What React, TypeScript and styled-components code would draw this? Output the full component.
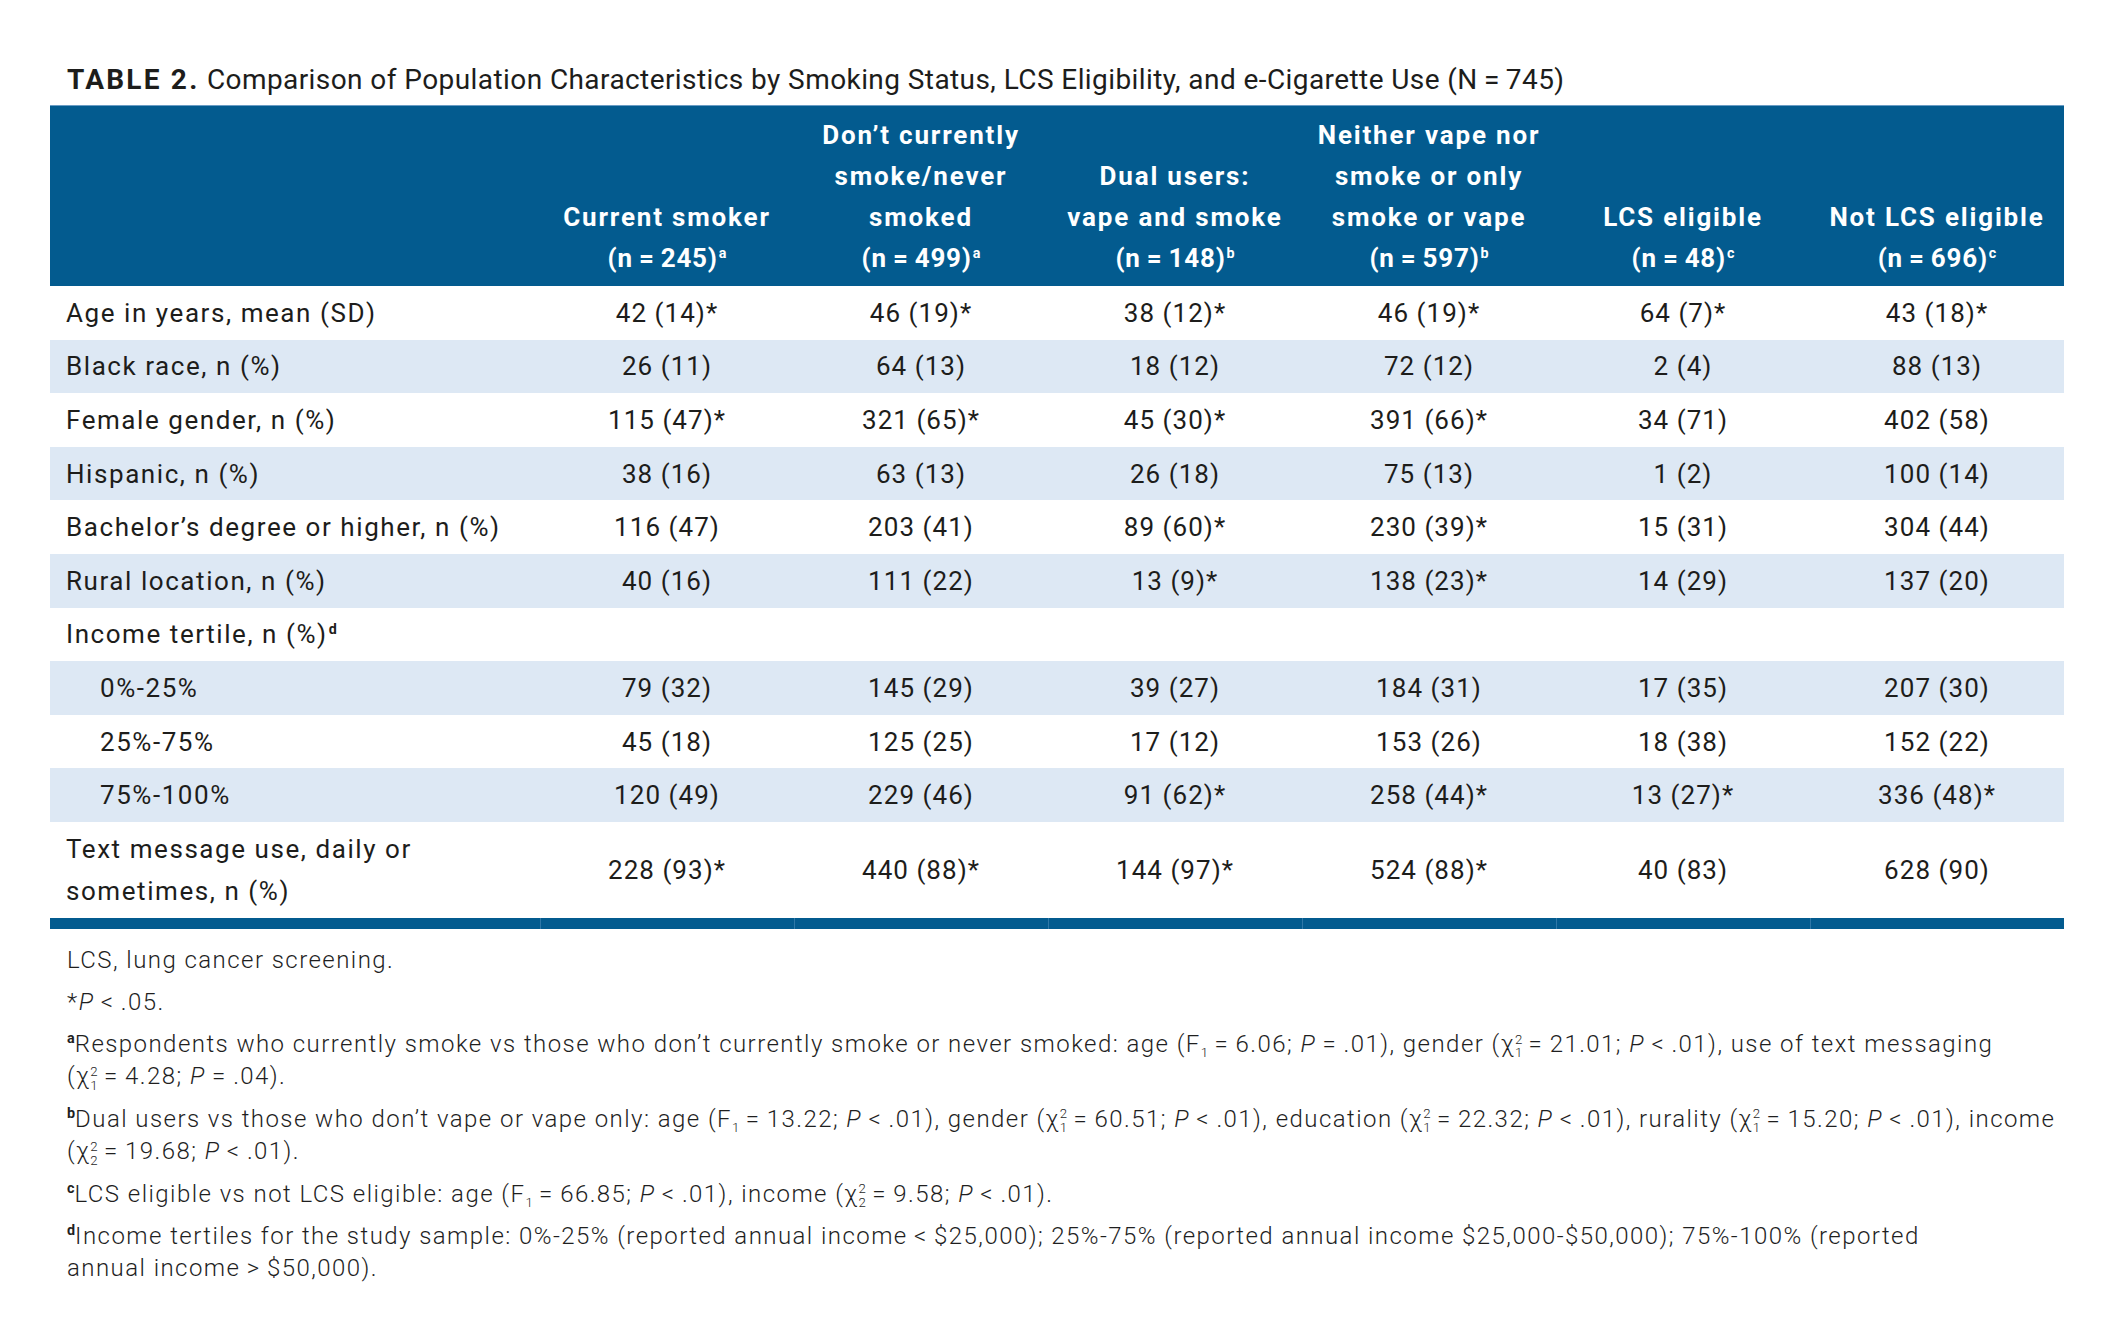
import React from 'react';
import styled, { createGlobalStyle } from 'styled-components';

const GlobalStyle = createGlobalStyle`
  body {
    margin: 0;
    background: #ffffff;
    font-family: Roboto, 'Liberation Sans', sans-serif;
    color: #1d1d1b;
  }
`;

const BLUE = '#035b8f';
const SHADE = '#dde8f4';
const COLUMNS = '490px repeat(6, 254px)';

const Page = styled.div`
  width: 2014px;
  padding: 62px 0 40px 50px;
`;

const Title = styled.div`
  font-size: 28px;
  line-height: 36px;
  letter-spacing: 0.015em;
  padding-left: 17px;
  margin-bottom: 7px;
  white-space: nowrap;
`;

const TitleLabel = styled.span`
  font-weight: 700;
  letter-spacing: 0.08em;
`;

const Grid = styled.div`
  display: flex;
  flex-direction: column;
`;

const HeaderRow = styled.div`
  display: grid;
  grid-template-columns: ${COLUMNS};
  background: ${BLUE};
  border-top: 1px solid #6a9cc4;
  height: 181px;
  box-sizing: border-box;
  padding: 9px 0 7px;
  align-items: end;
`;

const HeaderCell = styled.div`
  color: #ffffff;
  font-weight: 700;
  font-size: 26px;
  line-height: 41px;
  letter-spacing: 0.07em;
  text-align: center;
`;

const CountLine = styled.div`
  letter-spacing: 0.03em;
`;

const Row = styled.div<{ $shaded?: boolean; $tall?: boolean }>`
  display: grid;
  grid-template-columns: ${COLUMNS};
  height: ${(p) => (p.$tall ? 96 : 53.6)}px;
  background: ${(p) => (p.$shaded ? SHADE : '#ffffff')};
  align-items: center;
  font-size: 26px;
  letter-spacing: 0.06em;
`;

const LabelCell = styled.div<{ $indent?: boolean; $tall?: boolean }>`
  padding-left: ${(p) => (p.$indent ? 50 : 16)}px;
  line-height: ${(p) => (p.$tall ? 42 : 30)}px;
  white-space: nowrap;
`;

const ValueCell = styled.div`
  text-align: center;
  line-height: 30px;
  letter-spacing: 0.04em;
  white-space: nowrap;
`;

const Sup = styled.sup`
  font-size: 0.55em;
  font-weight: 700;
  line-height: 0;
  vertical-align: 0.65em;
  margin-left: 1px;
  letter-spacing: 0;
`;

const BottomBar = styled.div`
  display: grid;
  grid-template-columns: ${COLUMNS};
  height: 11px;
  background: ${BLUE};
`;

const BarSegment = styled.div<{ $first?: boolean }>`
  border-left: ${(p) => (p.$first ? 'none' : '1px solid #2f78a8')};
`;

const Notes = styled.div`
  margin-top: 15px;
  padding-left: 17px;
  font-size: 24px;
  font-weight: 300;
  line-height: 32px;
  letter-spacing: 0.06em;
  color: #1f1f1f;
`;

const Note = styled.p`
  margin: 0 0 10px;
  white-space: nowrap;
`;

const NoteMark = styled.span`
  font-size: 0.6em;
  font-weight: 700;
  vertical-align: 0.6em;
  line-height: 0;
  letter-spacing: 0;
`;

const Sub = styled.sub`
  font-size: 0.55em;
  line-height: 0;
  vertical-align: -0.35em;
  letter-spacing: 0;
`;

const Scripts = styled.span`
  display: inline-block;
  vertical-align: -0.42em;
  font-size: 0.55em;
  line-height: 1.05;
  letter-spacing: 0;
  & > span {
    display: block;
  }
`;

const Em = styled.i`
  font-style: italic;
`;

const T = '\u2009';

const Chi = ({ sup, sub }: { sup: string; sub: string }) => (
  <>
    χ
    <Scripts>
      <span>{sup}</span>
      <span>{sub}</span>
    </Scripts>
  </>
);

const F = ({ sub }: { sub: string }) => (
  <>
    F<Sub>{sub}</Sub>
  </>
);

const P = () => <Em>P</Em>;

interface HeaderDef {
  lines: string[];
  n: string;
  mark: string;
}

const HEADERS: HeaderDef[] = [
  { lines: ['Current smoker'], n: '245', mark: 'a' },
  { lines: ['Don’t currently', 'smoke/never', 'smoked'], n: '499', mark: 'a' },
  { lines: ['Dual users:', 'vape and smoke'], n: '148', mark: 'b' },
  { lines: ['Neither vape nor', 'smoke or only', 'smoke or vape'], n: '597', mark: 'b' },
  { lines: ['LCS eligible'], n: '48', mark: 'c' },
  { lines: ['Not LCS eligible'], n: '696', mark: 'c' },
];

interface RowDef {
  label: React.ReactNode;
  values: string[];
  indent?: boolean;
  tall?: boolean;
}

const ROWS: RowDef[] = [
  { label: 'Age in years, mean (SD)', values: ['42 (14)*', '46 (19)*', '38 (12)*', '46 (19)*', '64 (7)*', '43 (18)*'] },
  { label: 'Black race, n (%)', values: ['26 (11)', '64 (13)', '18 (12)', '72 (12)', '2 (4)', '88 (13)'] },
  { label: 'Female gender, n (%)', values: ['115 (47)*', '321 (65)*', '45 (30)*', '391 (66)*', '34 (71)', '402 (58)'] },
  { label: 'Hispanic, n (%)', values: ['38 (16)', '63 (13)', '26 (18)', '75 (13)', '1 (2)', '100 (14)'] },
  { label: 'Bachelor’s degree or higher, n (%)', values: ['116 (47)', '203 (41)', '89 (60)*', '230 (39)*', '15 (31)', '304 (44)'] },
  { label: 'Rural location, n (%)', values: ['40 (16)', '111 (22)', '13 (9)*', '138 (23)*', '14 (29)', '137 (20)'] },
  {
    label: (
      <>
        Income tertile, n (%)<Sup>d</Sup>
      </>
    ),
    values: ['', '', '', '', '', ''],
  },
  { label: '0%-25%', indent: true, values: ['79 (32)', '145 (29)', '39 (27)', '184 (31)', '17 (35)', '207 (30)'] },
  { label: '25%-75%', indent: true, values: ['45 (18)', '125 (25)', '17 (12)', '153 (26)', '18 (38)', '152 (22)'] },
  { label: '75%-100%', indent: true, values: ['120 (49)', '229 (46)', '91 (62)*', '258 (44)*', '13 (27)*', '336 (48)*'] },
  {
    label: (
      <>
        Text message use, daily or
        <br />
        sometimes, n (%)
      </>
    ),
    tall: true,
    values: ['228 (93)*', '440 (88)*', '144 (97)*', '524 (88)*', '40 (83)', '628 (90)'],
  },
];

export default function App() {
  return (
    <Page>
      <GlobalStyle />
      <Title>
        <TitleLabel>TABLE 2.</TitleLabel> Comparison of Population Characteristics by Smoking Status, LCS
        Eligibility, and e-Cigarette Use (N{T}={T}745)
      </Title>

      <Grid>
        <HeaderRow>
          <div />
          {HEADERS.map((h) => (
            <HeaderCell key={h.n}>
              {h.lines.map((l) => (
                <div key={l}>{l}</div>
              ))}
              <CountLine>
                (n{T}={T}
                {h.n})<Sup>{h.mark}</Sup>
              </CountLine>
            </HeaderCell>
          ))}
        </HeaderRow>

        {ROWS.map((r, i) => (
          <Row key={i} $shaded={i % 2 === 1} $tall={r.tall}>
            <LabelCell $indent={r.indent} $tall={r.tall}>
              {r.label}
            </LabelCell>
            {r.values.map((v, j) => (
              <ValueCell key={j}>{v}</ValueCell>
            ))}
          </Row>
        ))}

        <BottomBar>
          {Array.from({ length: 7 }).map((_, i) => (
            <BarSegment key={i} $first={i === 0} />
          ))}
        </BottomBar>
      </Grid>

      <Notes>
        <Note>LCS, lung cancer screening.</Note>
        <Note>
          *<P />
          {T}&lt;{T}.05.
        </Note>
        <Note>
          <NoteMark>a</NoteMark>Respondents who currently smoke vs those who don’t currently smoke or never smoked:
          age (<F sub="1" />
          {T}={T}6.06; <P />
          {T}={T}.01), gender (<Chi sup="2" sub="1" />
          {T}={T}21.01; <P />
          {T}&lt;{T}.01), use of text messaging
          <br />(<Chi sup="2" sub="1" />
          {T}={T}4.28; <P />
          {T}={T}.04).
        </Note>
        <Note>
          <NoteMark>b</NoteMark>Dual users vs those who don’t vape or vape only: age (<F sub="1" />
          {T}={T}13.22; <P />
          {T}&lt;{T}.01), gender (<Chi sup="2" sub="1" />
          {T}={T}60.51; <P />
          {T}&lt;{T}.01), education (<Chi sup="2" sub="1" />
          {T}={T}22.32; <P />
          {T}&lt;{T}.01), rurality (<Chi sup="2" sub="1" />
          {T}={T}15.20; <P />
          {T}&lt;{T}.01), income
          <br />(<Chi sup="2" sub="2" />
          {T}={T}19.68; <P />
          {T}&lt;{T}.01).
        </Note>
        <Note>
          <NoteMark>c</NoteMark>LCS eligible vs not LCS eligible: age (<F sub="1" />
          {T}={T}66.85; <P />
          {T}&lt;{T}.01), income (<Chi sup="2" sub="2" />
          {T}={T}9.58; <P />
          {T}&lt;{T}.01).
        </Note>
        <Note>
          <NoteMark>d</NoteMark>Income tertiles for the study sample: 0%-25% (reported annual income{T}&lt;{T}$25,000);
          25%-75% (reported annual income $25,000-$50,000); 75%-100% (reported
          <br />
          annual income{T}&gt;{T}$50,000).
        </Note>
      </Notes>
    </Page>
  );
}
